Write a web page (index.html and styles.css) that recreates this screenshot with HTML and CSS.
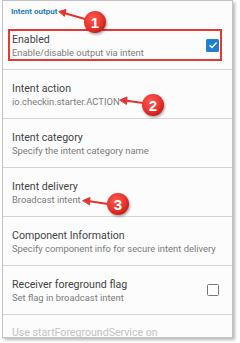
FILE: index.html
```html
<!DOCTYPE html>
<html>
<head>
<meta charset="utf-8">
<link rel="stylesheet" href="styles.css">
</head>
<body>
<div class="screen">
  <div class="header">Intent output</div>
  <div class="row row-switch">
    <div class="texts">
      <div class="title">Enabled</div>
      <div class="summary">Enable/disable output via intent</div>
    </div>
    <div class="checkbox checked">
      <svg viewBox="0 0 12 12" width="12" height="12"><path d="M2.6 6.2 L5 8.5 L9.6 3.6" fill="none" stroke="#fff" stroke-width="1.5"/></svg>
    </div>
    <div class="highlight"></div>
  </div>
  <div class="row">
    <div class="texts">
      <div class="title">Intent action</div>
      <div class="summary">io.checkin.starter.ACTION</div>
    </div>
  </div>
  <div class="row">
    <div class="texts">
      <div class="title">Intent category</div>
      <div class="summary">Specify the intent category name</div>
    </div>
  </div>
  <div class="row">
    <div class="texts">
      <div class="title">Intent delivery</div>
      <div class="summary">Broadcast intent</div>
    </div>
  </div>
  <div class="row">
    <div class="texts">
      <div class="title">Component Information</div>
      <div class="summary">Specify component info for secure intent delivery</div>
    </div>
  </div>
  <div class="row">
    <div class="texts">
      <div class="title">Receiver foreground flag</div>
      <div class="summary">Set flag in broadcast intent</div>
    </div>
    <div class="checkbox"></div>
  </div>
  <div class="row disabled">
    <div class="texts">
      <div class="title">Use startForegroundService on</div>
    </div>
  </div>
</div>
<svg class="callouts" width="240" height="343" viewBox="0 0 240 343">
  <defs>
    <radialGradient id="g" cx="40%" cy="35%" r="65%">
      <stop offset="0" stop-color="#ff5a52"/>
      <stop offset="0.7" stop-color="#e8322c"/>
      <stop offset="1" stop-color="#c4201c"/>
    </radialGradient>
    <filter id="sh" x="-30%" y="-30%" width="170%" height="170%">
      <feDropShadow dx="1" dy="1.5" stdDeviation="1.2" flood-color="#000" flood-opacity="0.35"/>
    </filter>
  </defs>
  <g stroke="#e8322c" stroke-width="2" fill="#e8322c" stroke-linecap="round">
    <line x1="85" y1="19" x2="64" y2="13"/>
    <path d="M59 11.5 L66 9.5 L64.5 16 Z" stroke-width="1"/>
    <line x1="143" y1="103" x2="125" y2="100.5"/>
    <path d="M120 100 L127 97 L126.5 104 Z" stroke-width="1"/>
    <line x1="108" y1="204" x2="88" y2="201"/>
    <path d="M83 200.5 L90 197.5 L89.5 204.5 Z" stroke-width="1"/>
  </g>
  <g filter="url(#sh)">
    <circle cx="95" cy="22" r="11" fill="url(#g)"/>
    <circle cx="153" cy="105" r="11" fill="url(#g)"/>
    <circle cx="118" cy="204" r="11" fill="url(#g)"/>
  </g>
  <g class="num">
    <text x="95" y="27.5">1</text>
    <text x="153" y="110.5">2</text>
    <text x="118" y="209.5">3</text>
  </g>
</svg>
</body>
</html>
```
FILE: styles.css
```css
html, body {
  margin: 0;
  padding: 0;
  background: #ffffff;
}
body {
  position: relative;
  width: 240px;
  height: 343px;
  overflow: hidden;
  font-family: Roboto, "Liberation Sans", sans-serif;
}
.screen {
  margin-left: 2px;
  width: 229px;
  height: 336px;
  border: 1px solid #c2c2c2;
  background: #fbfcfb;
  box-shadow: 2px 2px 3px rgba(0, 0, 0, 0.28);
  overflow: hidden;
}
.header {
  height: 20px;
  box-sizing: border-box;
  padding: 6px 0 0 8px;
  font-size: 8px;
  line-height: 10px;
  font-weight: 700;
  color: #1f7cbd;
}
.row {
  position: relative;
  display: flex;
  align-items: center;
  height: 48px;
  border-bottom: 1px solid #d4d4d4;
  padding: 0 13px 0 9px;
}
.texts {
  flex: 1;
  align-self: flex-start;
  padding-top: 13px;
}
.title {
  font-size: 10.6px;
  line-height: 12px;
  color: #444444;
  white-space: nowrap;
}
.summary {
  margin-top: 2px;
  font-size: 9.4px;
  line-height: 10px;
  color: #7c7c7c;
  white-space: nowrap;
}
.disabled .texts {
  padding-top: 12px;
}
.disabled .title {
  color: #c4c4c4;
}
.checkbox {
  width: 10px;
  height: 10px;
  border: 1.5px solid #767676;
  border-radius: 1.5px;
}
.checkbox.checked {
  width: 13px;
  height: 13px;
  border: none;
  background: #1f7fd0;
  display: flex;
  align-items: center;
  justify-content: center;
}
.highlight {
  position: absolute;
  left: 5px;
  top: 8px;
  width: 210px;
  height: 28px;
  border: 2px solid #e53935;
}
.callouts {
  position: absolute;
  left: 0;
  top: 0;
}
.num text {
  fill: #ffffff;
  font-family: "Liberation Sans", Arial, sans-serif;
  font-size: 15px;
  font-weight: 700;
  text-anchor: middle;
}
```
